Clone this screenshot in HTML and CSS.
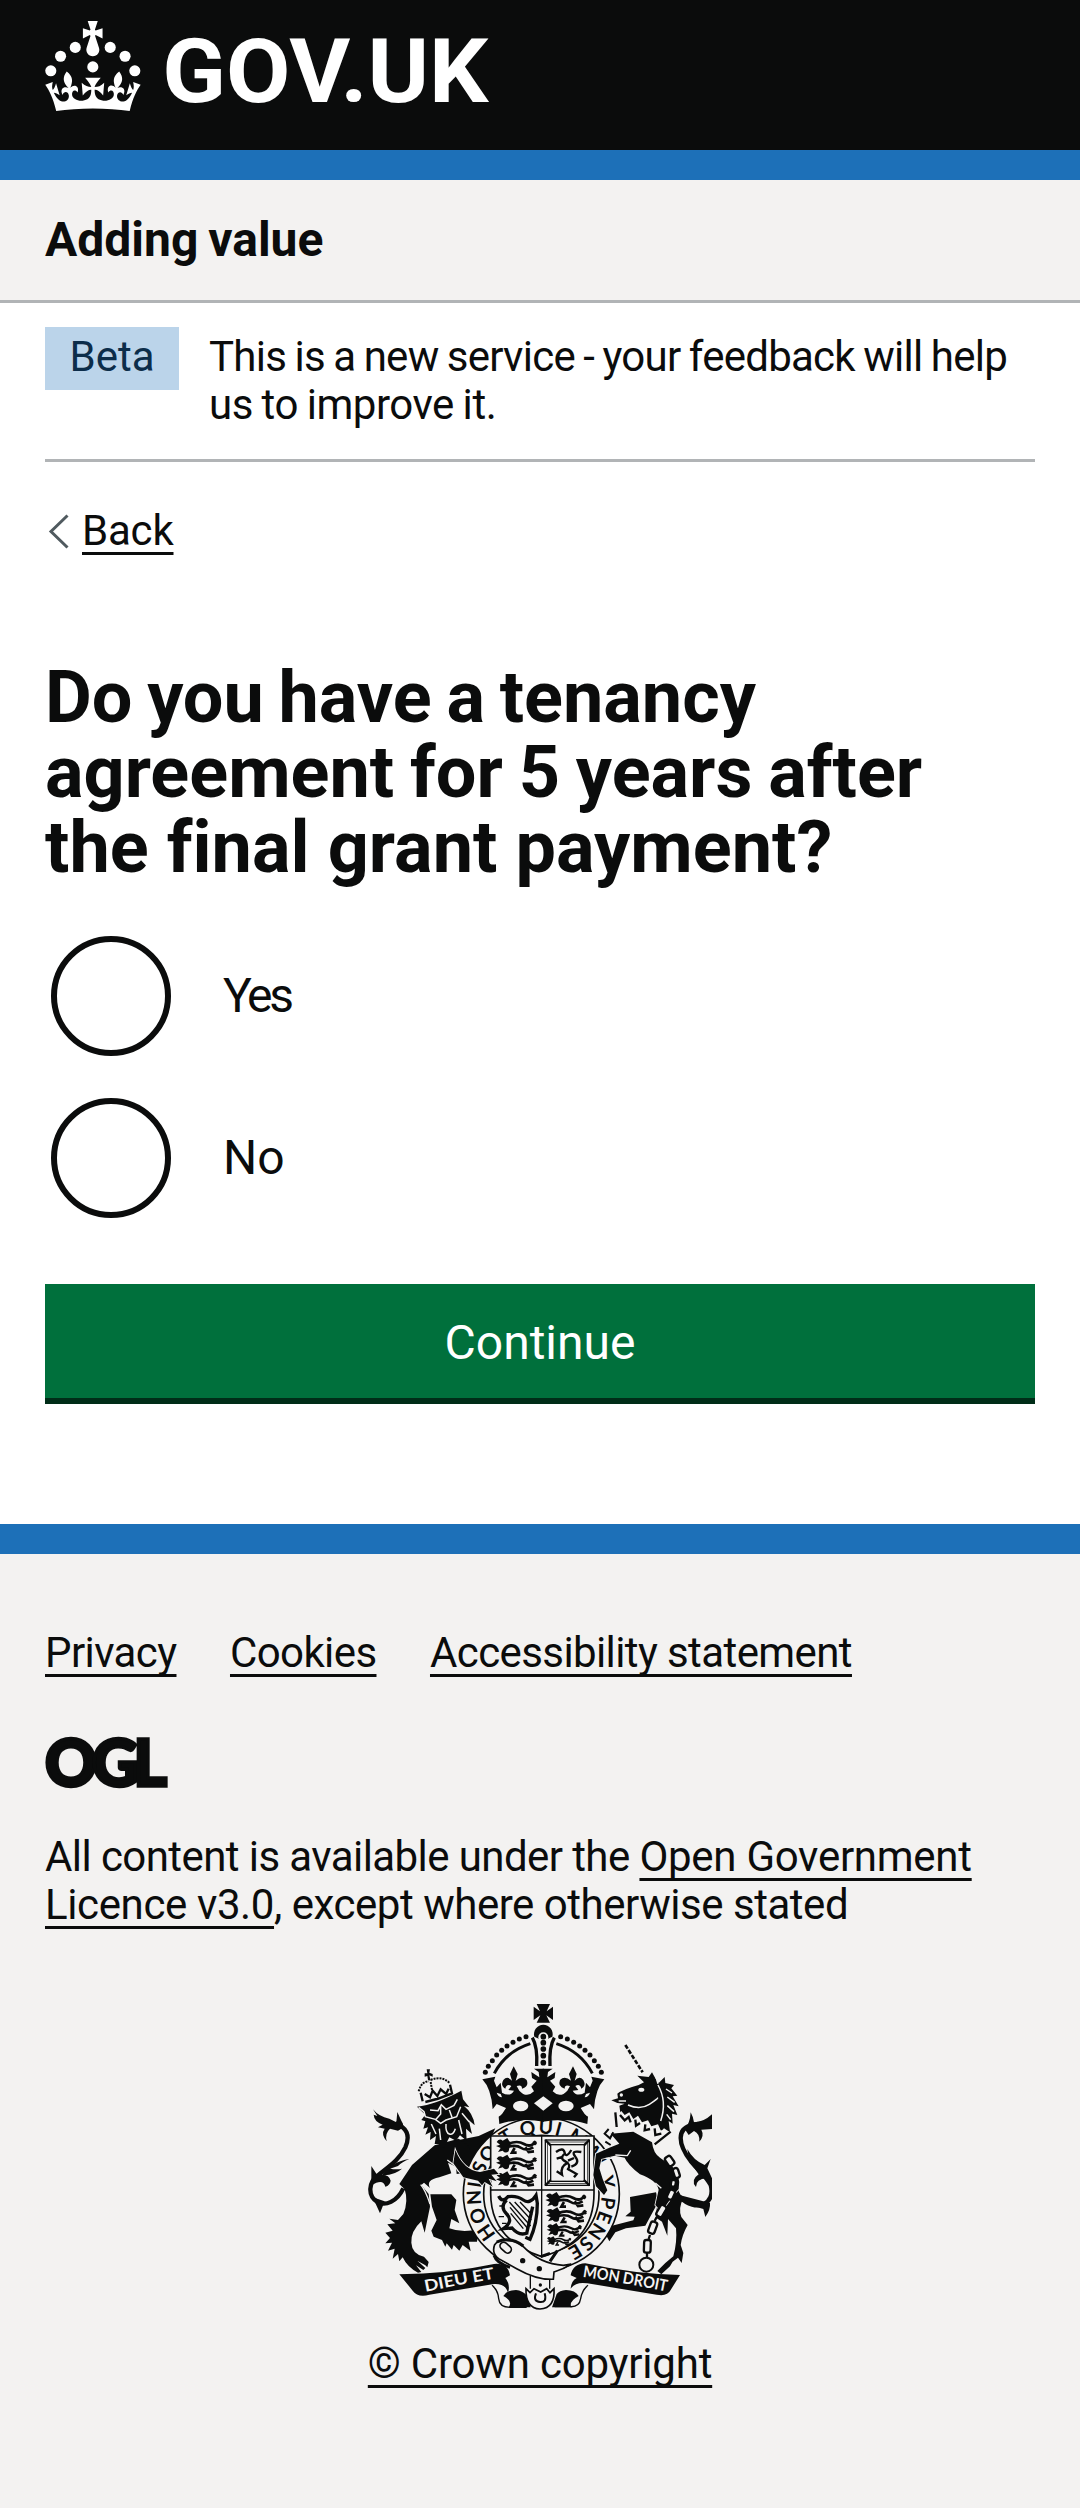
FILE: index.html
```html
<!DOCTYPE html>
<html lang="en">
<head>
<meta charset="utf-8">
<title>Do you have a tenancy agreement for 5 years after the final grant payment? - GOV.UK</title>
<link rel="stylesheet" href="styles.css">
</head>
<body>
<header class="header">
  <svg class="header-logo" viewBox="0 0 297 60" role="img" aria-label="GOV.UK">
    <circle cx="20" cy="17.6" r="3.7"/><circle cx="10.2" cy="23.5" r="3.7"/><circle cx="3.7" cy="33.2" r="3.7"/><circle cx="31.7" cy="30.6" r="3.7"/><circle cx="43.3" cy="17.6" r="3.7"/><circle cx="53.2" cy="23.5" r="3.7"/><circle cx="59.7" cy="33.2" r="3.7"/>
    <path d="M33.1,9.8c.2-.1.3-.3.5-.5l4.6,2.4v-6.8l-4.6,1.5c-.1-.2-.3-.3-.5-.5l1.9-5.9h-6.7l1.9,5.9c-.2.1-.3.3-.5.5l-4.6-1.5v6.8l4.6-2.4c.1.2.3.3.5.5l-2.6,8c-.9,2.8,1.2,5.7,4.1,5.7h0c3,0,5.1-2.9,4.1-5.7l-2.6-8ZM37,37.9s-3.4,3.8-4.1,6.1c2.2,0,4.2-.5,6.4-2.8l-.7,8.5c-2-2.8-4.4-4.1-5.7-3.8.1,3.1.5,6.7,5.8,7.2,3.7.3,6.7-1.5,7-3.8.4-2.6-2-4.3-3.7-1.6-1.4-4.5,2.4-6.1,4.9-3.2-1.9-4.5-1.8-7.7,2.4-10.9,3,4,2.6,7.3-1.2,11.1,2.4-1.3,6.2,0,4,4.6-1.2-2.8-3.7-2.2-4.2.2-.3,1.7.7,3.7,3,4.2,1.9.3,4.7-.9,7-5.9-1.3,0-2.4.7-3.9,1.7l2.4-8c.6,2.3,1.4,3.7,2.2,4.5.6-1.6.5-2.8,0-5.3l5,1.8c-2.6,3.6-5.2,8.7-7.3,17.5-7.4-1.1-15.7-1.7-24.5-1.7h0c-8.8,0-17.1.6-24.5,1.7-2.1-8.9-4.7-13.9-7.3-17.5l5-1.8c-.5,2.5-.6,3.7,0,5.3.8-.8,1.6-2.3,2.2-4.5l2.4,8c-1.5-1-2.6-1.7-3.9-1.7,2.3,5,5.2,6.2,7,5.9,2.3-.4,3.3-2.4,3-4.2-.5-2.4-3-3.1-4.2-.2-2.2-4.6,1.6-6,4-4.6-3.7-3.7-4.2-7.1-1.2-11.1,4.2,3.2,4.3,6.4,2.4,10.9,2.5-2.8,6.3-1.3,4.9,3.2-1.8-2.7-4.1-1-3.7,1.6.3,2.3,3.3,4.1,7,3.8,5.4-.5,5.7-4.2,5.8-7.2-1.3-.2-3.7,1-5.7,3.8l-.7-8.5c2.2,2.3,4.2,2.7,6.4,2.8-.7-2.3-4.1-6.1-4.1-6.1h10.6,0Z"/>
    <text class="header-logotype" x="78" y="54" textLength="217.5" lengthAdjust="spacingAndGlyphs">GOV.UK</text>
  </svg>
</header>
<div class="service-bar"><a class="service-name">Adding value</a></div>
<div class="container">
  <div class="phase-banner">
    <strong class="tag">Beta</strong>
    <span class="phase-text">This is a new service - your feedback will help<br><span class="phase-second">us to improve it.</span></span>
  </div>
  <a class="back-link">
    <svg class="back-arrow" viewBox="0 0 24 36"><path d="M22.5 1.5L6 17.5L22.5 33.5"/></svg>
    <span class="link back-text">Back</span>
  </a>
  <main>
    <h1 class="heading"><span class="h-line h-one">Do you have a tenancy</span><span class="h-line h-two">agreement for 5 years after</span><span class="h-line h-three">the final grant payment?</span></h1>
    <div class="radios">
      <label class="radio"><span class="radio-circle"></span><span class="radio-label yes">Yes</span></label>
      <label class="radio"><span class="radio-circle"></span><span class="radio-label">No</span></label>
    </div>
    <button class="button" type="button">Continue</button>
  </main>
</div>
<footer class="footer">
  <nav class="footer-links"><a class="link">Privacy</a><a class="link">Cookies</a><a class="link">Accessibility statement</a></nav>
  <svg class="ogl" viewBox="0 0 123 51" role="img" aria-label="Open Government Licence">
    <text class="ogl-text" x="0" y="48.5" textLength="117" lengthAdjust="spacingAndGlyphs">OGL</text>
  </svg>
  <p class="licence"><span class="lic-a">All content is available under the </span><a class="link lic-b">Open Government</a><br><a class="link lic-c">Licence v3.0</a><span class="lic-d">, except where otherwise stated</span></p>
  <div class="copyright">
    <svg class="crest" viewBox="54 42 1032 918">
      <defs>
        <path id="motto" d="M439 733A181 181 0 1 1 648 777"/>
        <path id="scroll-left" d="M226 905Q340 882 440 865"/>
        <path id="scroll-right" d="M697 860Q830 880 955 906"/>
        <g id="passant">
          <path d="M2 6Q10-6 20 2L34-6 40 4Q48 8 42 16L38 34Q28 42 20 32L6 36 14 24 0 18 12 14z"/>
          <path class="ln" d="M36 12Q64 0 84 12T120 4M36 20Q62 14 76 24T112 22M56 24L48 38 62 38M88 22L98 36 114 34M112 4L120 14" stroke-width="8"/>
        </g>
        <g id="crown-half">
          <g class="ink"><circle cx="406" cy="247" r="7.5"/><circle cx="415" cy="229" r="7.5"/><circle cx="427" cy="212" r="7.5"/><circle cx="440" cy="195" r="7.5"/><circle cx="455" cy="181" r="7.5"/><circle cx="471" cy="168" r="7.5"/><circle cx="489" cy="157" r="7.5"/><circle cx="508" cy="147" r="7.5"/><circle cx="528" cy="140" r="7.5"/></g>
          <path class="ln" d="M433 250Q468 184 541 161" stroke-width="9"/>
          <path class="ln" d="M547 143Q563 170 560 228" stroke-width="10"/>
          <path class="ink" d="M397 268L436 260 432 272 440 292 452 278 456 308Q480 322 492 302L475 300 484 288Q470 280 466 296Q450 288 460 270Q472 256 486 272L480 252 491 229 503 252 497 272Q516 256 530 270Q538 290 516 296Q516 282 500 288L508 302Q530 326 552 304L544 290 560 272 546 264 544 246 568 262 566 246 552 236H582V395Q510 382 448 402L446 380 456 372 468 354 440 342 428 358Q424 296 397 268z"/>
          <ellipse class="paper" cx="512" cy="348" rx="23" ry="16"/>
          <path class="paper" d="M440 346L466 355 450 377 434 366z"/>
          <path class="paper" d="M440 308Q444 320 456 322L452 312z"/>
        </g>
      </defs>

      <g transform="translate(36 210)">
        <path class="ink" d="M290 240L350 228 400 205 360 290 320 300z"/>
        <path class="ln" d="M124 385C105 425 70 440 45 425C16 406 20 366 48 346C80 320 112 300 130 262C146 226 134 202 100 190" stroke-width="13"/>
        <path class="ink" d="M33 148Q50 170 82 176L103 187 106 156 118 182Q132 200 108 212L84 206Q68 220 74 244Q56 222 68 206L48 202 62 194Q36 184 35 164L46 168zM56 350Q90 304 142 297Q120 306 108 318L84 326Q104 330 120 326Q100 344 66 346zM28 318L46 346Q80 338 86 362 84 376 70 380 64 354 28 376zM32 412L54 460 68 424z"/>
        <path class="ink" d="M205 403L268 403 283 420 278 450 292 490 268 477 262 505Q300 520 350 508L345 545 320 545 326 573 302 555 292 572 275 555 270 569 254 550 250 560 240 540 215 530 208 512 224 480 210 440z"/>
        <path class="ink" d="M218 256L150 315 112 372 128 388Q140 424 124 462L108 480 82 476 100 490 76 493 92 512 70 518 84 534 70 550 90 548 78 572 98 566 92 596 108 582 112 604 122 592Q136 622 168 638L178 636 162 616 184 630 190 624 166 602 190 616 196 622 200 606 186 590Q150 582 148 548T178 484L188 518 204 440 200 402 178 375 186 368 204 384Q190 360 232 352L268 340 258 308 282 320 284 342 300 340 306 358 320 352 330 368 348 360 354 376 372 366 384 380 390 360 412 366 404 346 380 330 352 318Q330 290 318 256L290 236z"/>
        <path class="cut" d="M176 374Q190 390 204 432M256 300L280 318 290 336" stroke-width="4"/>
        <path class="ink" d="M165 140Q220 134 298 92L303 118 322 142 306 138Q334 160 338 196L320 180 330 222 312 206 314 242 294 226 282 242 262 232 246 264 232 252 218 252 222 228 204 240 206 216 190 224 198 202 184 206 190 184 178 180 190 164z"/>
        <path class="cut" d="M170 142L186 155 190 170 220 178 236 190 252 180 284 170 296 140M204 150L228 152 238 134 252 148 276 136 286 118M236 138L236 162 222 178M262 150L270 172M252 192Q250 218 262 222T280 206M208 192L222 222M232 206L236 240M290 180L300 222M300 160L322 186" stroke-width="4.5"/>
        <path class="ln" d="M182 124L176 98M190 126Q230 118 270 100L264 74M188 102L204 112 212 92 226 108 236 88 252 102 260 86" stroke-width="7"/>
        <path class="ln" d="M170 94Q178 64 200 64M206 60Q240 46 264 70M206 66L210 90" stroke-width="6" stroke-dasharray="6 3"/>
        <path class="ink" d="M194 28H204L202 38 212 42 212 50 202 46 206 62 198 60 196 48 188 50 188 40 196 40z"/>
      </g>

      <g transform="translate(720 135)">
        <path class="ln" d="M268 485C320 536 378 506 362 450C346 420 330 412 302 378C262 326 262 282 302 272C330 262 346 266 368 264" stroke-width="13"/>
        <path class="ink" d="M284 282Q300 266 302 232Q310 246 312 262Q340 262 366 238V258L340 266 366 270V282L334 284Q344 302 328 320Q330 296 312 288L296 300zM298 378L292 342Q310 376 344 390L362 372 352 400 366 430V452L350 430Q318 432 318 456Q300 436 326 418zM268 480Q304 516 340 522L346 546Q362 524 360 504z"/>
        <path class="ink" d="M120 486L198 472 205 500 166 572 108 580 76 592 58 619 50 604 66 572 130 556 134 545 106 544 122 530z"/>
        <path class="ink" d="M205 460L262 450Q264 474 280 490Q264 520 274 546L293 570Q276 600 272 630L280 654 275 684 264 668 248 680 240 694 214 718 202 708 226 684 250 664Q262 620 258 580L234 552 232 602 216 560 198 548z"/>
      </g>

      <ellipse class="paper garter" cx="574" cy="612" rx="234" ry="230"/>
      <ellipse class="paper garter" cx="574" cy="612" rx="173" ry="176"/>
      <text class="motto"><textPath href="#motto" textLength="905" lengthAdjust="spacing">HONI SOIT QUI MAL Y PENSE</textPath></text>

      <path class="paper shield" d="M422 438H732V610Q732 760 575 800Q422 750 422 610z"/>
      <path class="ln" d="M575 438V800M422 600H732" stroke-width="4"/>
      <g class="ink">
        <use href="#passant" transform="translate(438 450)"/><use href="#passant" transform="translate(438 500)"/><use href="#passant" transform="translate(438 550)"/>
        <use href="#passant" transform="translate(586 612)"/><use href="#passant" transform="translate(588 658)"/><use href="#passant" transform="translate(590 704) scale(.86)"/><use href="#passant" transform="translate(590 742) scale(.6)"/>
      </g>
      <g class="ln" stroke-width="4">
        <rect x="586" y="450" width="132" height="136"/><rect x="592" y="456" width="120" height="124" stroke-width="2"/><rect x="602" y="464" width="101" height="110"/>
        <path d="M586 450L602 466M718 450L702 466M586 586L602 570M718 586L702 570" stroke-width="7"/>
        <path d="M618 486Q640 470 644 488T664 480M646 490Q626 504 646 514T652 540M620 506L640 500M650 520Q630 530 636 554L620 544M652 536L680 552 672 562M664 530Q692 520 676 500T694 486M654 512L672 504" stroke-width="7"/>
      </g>
      <path class="ln" d="M446 618Q456 640 474 620Q500 616 520 630T558 616L562 640Q562 700 540 748L526 742M470 630Q448 650 470 672T460 716L486 714Q508 740 534 728M548 650L530 730" stroke-width="10"/>
      <path class="ln" d="M448 648H464M446 680H462M456 700H470M478 636L542 708M480 652L532 714M482 670L520 716M494 636L544 690M510 636L546 674" stroke-width="4"/>

      <path class="paper belt" d="M434 764Q450 742 500 756L520 770Q570 822 640 826L664 822Q640 838 612 846L610 868Q560 870 500 836L446 806Q424 790 434 764z"/>
      <path class="ln" d="M432 796Q440 820 480 832M440 756Q480 738 520 768M600 814L622 782M572 800L600 790" stroke-width="9"/>
      <rect class="belt paper" x="448" y="762" width="38" height="22" rx="11" transform="rotate(42 467 773)"/>
      <circle class="ink" cx="518" cy="812" r="8"/><circle class="ink" cx="568" cy="836" r="8"/>

      <path class="paper" d="M420 884Q430 940 470 952H680Q710 930 716 884L640 870H500z"/>
      <path class="ln" d="M426 886Q444 900 446 926T480 952H530M714 886Q696 900 692 926T660 950H614" stroke-width="4"/>
      <path class="ink" d="M460 918Q470 900 498 900Q518 902 530 916L542 952H476Q490 934 460 918zM686 918Q676 900 648 900Q628 902 620 912L606 952H664Q656 934 686 918z"/>
      <path class="ln" d="M541 858V896M599 868V896" stroke-width="4"/><circle class="ink" cx="571" cy="885" r="5"/>
      <path class="paper belt" d="M528 896L540 908 552 896 572 906 590 896 600 908 612 896Q616 954 570 957Q526 954 528 896z"/>
      <path class="ln" d="M558 910Q548 934 570 936T584 910" stroke-width="6"/>
      <path class="ink" d="M148 853Q290 852 432 822Q474 818 480 856L466 864Q482 884 474 910Q468 880 432 882L238 914Q204 924 188 902z"/>
      <path class="ink" d="M990 855Q850 852 706 820Q668 822 662 856L680 864Q664 872 662 896Q678 874 712 880L920 914Q952 920 962 900z"/>
      <text class="scroll"><textPath href="#scroll-left" textLength="212" lengthAdjust="spacingAndGlyphs">DIEU ET</textPath></text>
      <text class="scroll"><textPath href="#scroll-right" textLength="256" lengthAdjust="spacingAndGlyphs">MON DROIT</textPath></text>

      <path class="ink rim" d="M316 480Q340 540 390 546L432 536 446 552 424 554 440 574 416 566 428 590 404 576 396 586 384 572 340 562 310 520z"/>

      <use href="#crown-half"/><use href="#crown-half" transform="matrix(-1 0 0 1 1160 0)"/>
      <path class="paper" d="M580 319L608 340 580 362 552 340z"/>
      <path class="ink" d="M560 42H600L590 64 609 50V90L589 76 600 98H560L571 76 551 90V50L570 64z"/>
      <path class="ink" d="M553 140A28 28 0 1 1 607 140L594 146H566z"/>
      <circle class="paper" cx="580" cy="142" r="15"/>
      <g class="ink"><circle cx="580" cy="140" r="8.5"/><circle cx="580" cy="158" r="8.5"/><circle cx="580" cy="177" r="8.5"/><circle cx="580" cy="197" r="8.5"/><circle cx="580" cy="218" r="8.5"/></g>

      <g transform="translate(720 135)">
        <path class="ink rim" d="M62 296L130 290 186 322Q190 356 210 368L246 394Q274 420 266 462L250 480 214 530 196 510 206 464Q200 436 150 418 112 388 104 368L74 362 34 372 28 400 38 432 52 466 42 480 18 454 10 420 18 356 58 338 88 326z"/>
        <path class="cut" d="M76 360L112 362 122 346M46 370H90M196 444L214 460" stroke-width="4"/>
        <path class="ln" d="M56 282L44 296 60 310 70 292M46 320L62 330" stroke-width="6"/>
        <path class="ln" d="M106 30L158 112" stroke-width="8" stroke-dasharray="13 5"/>
        <path class="ink" d="M142 122L176 126 186 112 196 130 206 144 224 126 226 144 252 150 244 160 262 182 248 184 266 214 250 210 262 240 246 236 248 266 236 258 240 292 222 280 206 296 92 240 88 212 104 206 82 204 64 196 84 190 82 176Q96 164 146 150L162 142z"/>
        <path class="cut" d="M204 150Q232 200 212 258M228 162L246 174M232 186L254 202M232 212L252 230M230 238L242 254M114 210Q150 226 178 208T202 188M86 198H108M198 126L204 146" stroke-width="4.5"/>
        <ellipse class="paper" cx="154" cy="164" rx="9" ry="6"/><circle class="paper" cx="94" cy="180" r="5"/>
        <path class="paper" d="M76 232L86 236 94 228 104 240 118 232 130 252 144 242 156 262 174 256 184 274 204 268 212 286 242 290 196 326Q140 280 78 270z"/>
        <path class="ln" d="M76 232L80 276M242 290L194 328M90 240L104 256 116 246 122 262M136 254L138 272 150 264M166 268L164 286 180 282M194 280L196 300 214 296" stroke-width="7"/>
        <g class="chain">
          <rect x="224" y="368" width="30" height="20" rx="7" transform="rotate(55 239 378)"/><rect x="244" y="406" width="30" height="16" rx="7" transform="rotate(72 259 414)"/><rect x="240" y="438" width="20" height="14" rx="6" transform="rotate(100 250 445)"/><rect x="228" y="470" width="30" height="18" rx="7" transform="rotate(114 243 479)"/><rect x="196" y="518" width="36" height="20" rx="7" transform="rotate(120 214 528)"/><rect x="170" y="568" width="36" height="20" rx="7" transform="rotate(110 188 578)"/><rect x="153" y="624" width="38" height="20" rx="7" transform="rotate(92 172 634)"/>
        </g>
        <path class="ln" d="M228 502L222 512M200 546L194 558M180 600L176 612M171 654V668" stroke-width="7"/>
        <circle class="ln" cx="169" cy="689" r="21" stroke-width="6"/>
      </g>
    </svg>
    <a class="link crown-link">© Crown copyright</a>
  </div>
</footer>
</body>
</html>
```
FILE: styles.css
```css
* { box-sizing: border-box; }
body {
  margin: 0;
  background: #fff;
  color: #0b0c0c;
  font-family: Roboto, "Liberation Sans", sans-serif;
  font-size: 42px;
  line-height: 48px;
  font-kerning: normal;
}
.header {
  height: 180px;
  padding: 21px 45px 0;
  background: #0b0c0c;
  border-bottom: 30px solid #1d70b8;
}
.header-logo { display: block; width: 446px; height: 90px; fill: #fff; overflow: visible; }
.header-logotype { font: 700 59px Roboto, sans-serif; }
.service-bar {
  height: 123px;
  padding: 30px 45px;
  background: #f3f2f1;
  border-bottom: 3px solid #b1b4b6;
  font-size: 48px;
  line-height: 60px;
  font-weight: 700;
  word-spacing: -2px;
}
.container { padding: 0 45px; }
.phase-banner {
  display: flex;
  align-items: flex-start;
  gap: 30px;
  height: 159px;
  padding-top: 24px;
  border-bottom: 3px solid #b1b4b6;
}
.tag {
  flex: none;
  width: 134px;
  height: 63px;
  padding-top: 6px;
  text-align: center;
  background: #bbd4ea;
  color: #0c2d4a;
  font-weight: 400;
}
.phase-text { padding-top: 6px; white-space: nowrap; letter-spacing: -.75px; word-spacing: -1.3px; }
.phase-second { letter-spacing: -.45px; }
.link {
  text-decoration: underline;
  text-decoration-thickness: 3px;
  text-underline-offset: 7px;
  text-decoration-skip-ink: none;
}
.back-link { display: flex; align-items: flex-start; margin-top: 45px; height: 48px; }
.back-arrow { width: 24px; height: 36px; margin-top: 7px; margin-right: 13px; fill: none; stroke: #505a5f; stroke-width: 3; }
.back-text { letter-spacing: -.2px; }
.heading { margin: 105px 0 45px; font-size: 72px; line-height: 75px; font-weight: 700; }
.h-line { display: block; white-space: nowrap; }
.h-one { word-spacing: -3.2px; }
.h-two { word-spacing: -2px; }
.h-three { letter-spacing: .05px; }
.radios { display: flex; flex-direction: column; gap: 30px; }
.radio { display: flex; align-items: center; height: 132px; padding-left: 6px; font-size: 48px; line-height: 60px; }
.radio-circle { width: 120px; height: 120px; border: 6px solid #0b0c0c; border-radius: 50%; }
.radio-label { margin-left: 52px; }
.yes { letter-spacing: -3.2px; }
.button {
  display: block;
  width: 100%;
  height: 120px;
  margin: 60px 0 120px;
  padding: 3px 0 0;
  border: 0;
  border-bottom: 6px solid #002d18;
  background: #00703c;
  color: #fff;
  font: 48px/60px Roboto, sans-serif;
}
.footer { height: 984px; padding: 75px 45px 0; border-top: 30px solid #1d70b8; background: #f3f2f1; }
.footer-links { display: flex; gap: 53.5px; letter-spacing: -.6px; }
.ogl { display: block; width: 123px; height: 51px; margin-top: 60px; overflow: visible; fill: #0b0c0c; }
.ogl-text { font: 900 65px Lato, sans-serif; letter-spacing: -5px; stroke: #0b0c0c; stroke-width: 3.5px; }
.licence { margin: 45px 0 0; white-space: nowrap; }
.lic-a { letter-spacing: -.58px; }
.lic-b { letter-spacing: -.28px; }
.lic-c { letter-spacing: -.38px; }
.lic-d { letter-spacing: -.47px; }
.copyright { display: flex; flex-direction: column; align-items: center; margin-top: 75px; }
.crest { width: 344px; height: 306px; margin-bottom: 30px; }
.crown-link { letter-spacing: -.2px; }
.ink { fill: #0b0c0c; }
.paper { fill: #f3f2f1; }
.ln { fill: none; stroke: #0b0c0c; }
.cut { fill: none; stroke: #f3f2f1; }
.garter, .shield, .belt { stroke: #0b0c0c; stroke-width: 5; }
.rim { stroke: #f3f2f1; stroke-width: 5; paint-order: stroke; }
.chain rect { fill: #f3f2f1; stroke: #0b0c0c; stroke-width: 7; }
.motto { font: 700 58px Lato, sans-serif; fill: #0b0c0c; }
.scroll { font: 700 48px Lato, sans-serif; fill: #f3f2f1; }
```
